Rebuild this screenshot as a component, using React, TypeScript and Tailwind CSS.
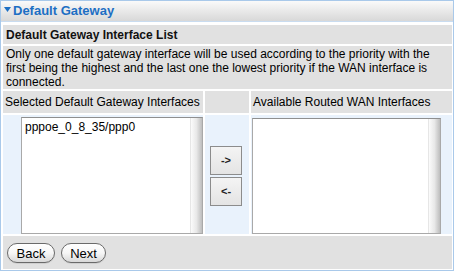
import React from 'react';

const font = { fontFamily: '"Liberation Sans", Arial, sans-serif' };

function ListBox({ items, className }: { items: string[]; className: string }) {
  return (
    <div className={`flex border border-[#a9a9a9] border-t-[#8f8f8f] bg-white ${className}`}>
      <div className="flex-1 pl-[3px] pt-[2px] text-[12px] leading-[14px] text-black">
        {items.map((item) => (
          <div key={item}>{item}</div>
        ))}
      </div>
      <div className="w-[12px] border-l border-[#e6e6e6] bg-gradient-to-r from-[#fbfbfb] via-[#e8e8e8] to-[#bdbdbd]" />
    </div>
  );
}

function MoveButton({ label }: { label: string }) {
  return (
    <button className="flex h-[29px] w-[32px] items-center justify-center border border-[#8c8c8c] bg-gradient-to-b from-[#f4f4f4] to-[#e4e4e4] text-[11px] font-bold leading-none text-[#222]">
      {label}
    </button>
  );
}

function PillButton({ label, width }: { label: string; width: string }) {
  return (
    <button
      className={`flex h-[20px] ${width} items-center justify-center rounded-full border border-[#6a6a6a] bg-gradient-to-b from-white via-[#f6f6f6] to-[#d8d8d8] text-[13px] leading-none text-black shadow-[0_1px_0_rgba(0,0,0,0.08)]`}
    >
      {label}
    </button>
  );
}

export default function App() {
  return (
    <div className="h-[273px] w-[454px] bg-white" style={font}>
      <div className="flex h-[271px] flex-col border border-[#a9c9ea]">
        {/* section header */}
        <div className="flex h-[21px] items-center border-b border-[#c9dcf0] bg-gradient-to-b from-[#fafafa] to-[#d8d8d8] pl-[3px]">
          <svg width="7" height="5" viewBox="0 0 7 5" className="mb-[3px]">
            <polygon points="0,0 7,0 3.5,5" fill="#1d6fc4" />
          </svg>
          <span className="ml-[2px] text-[13px] font-bold text-[#1d6fc4]">Default Gateway</span>
        </div>

        <div className="flex flex-col gap-[2px] pl-[2px] pr-[1px] pt-[3px]">
          <div className="flex h-[19px] items-center bg-[#e1e1e1] pl-[3px] text-[12px] font-bold text-[#111]">
            Default Gateway Interface List
          </div>
          <div className="h-[43px] bg-[#e1e1e1] pl-[3px] pt-[1px] text-[12px] leading-[14px] text-black">
            Only one default gateway interface will be used according to the priority with the first being the
            highest and the last one the lowest priority if the WAN interface is connected.
          </div>

          <div className="grid grid-cols-[200px_44px_1fr] gap-[2px]">
            <div className="flex h-[22px] items-center bg-[#e1e1e1] pl-[2px] text-[12px] text-black">
              Selected Default Gateway Interfaces
            </div>
            <div className="h-[22px] bg-[#e1e1e1]" />
            <div className="flex h-[22px] items-center bg-[#e1e1e1] pl-[2px] text-[12px] text-black">
              Available Routed WAN Interfaces
            </div>

            <div className="flex h-[119px] bg-[#e9f2fc] pl-[18px] pt-[2px]">
              <ListBox items={['pppoe_0_8_35/ppp0']} className="flex-1" />
            </div>
            <div className="flex h-[119px] flex-col gap-[2px] bg-[#e9f2fc] pl-[5px] pt-[31px]">
              <MoveButton label="->" />
              <MoveButton label="<-" />
            </div>
            <div className="flex h-[119px] bg-[#e9f2fc] pl-[1px] pt-[3px]">
              <ListBox items={[]} className="w-[189px]" />
            </div>
          </div>

          <div className="flex h-[33px] gap-[6px] bg-[#e1e1e1] pl-[4px] pt-[7px]">
            <PillButton label="Back" width="w-[48px]" />
            <PillButton label="Next" width="w-[45px]" />
          </div>
        </div>
      </div>
    </div>
  );
}
